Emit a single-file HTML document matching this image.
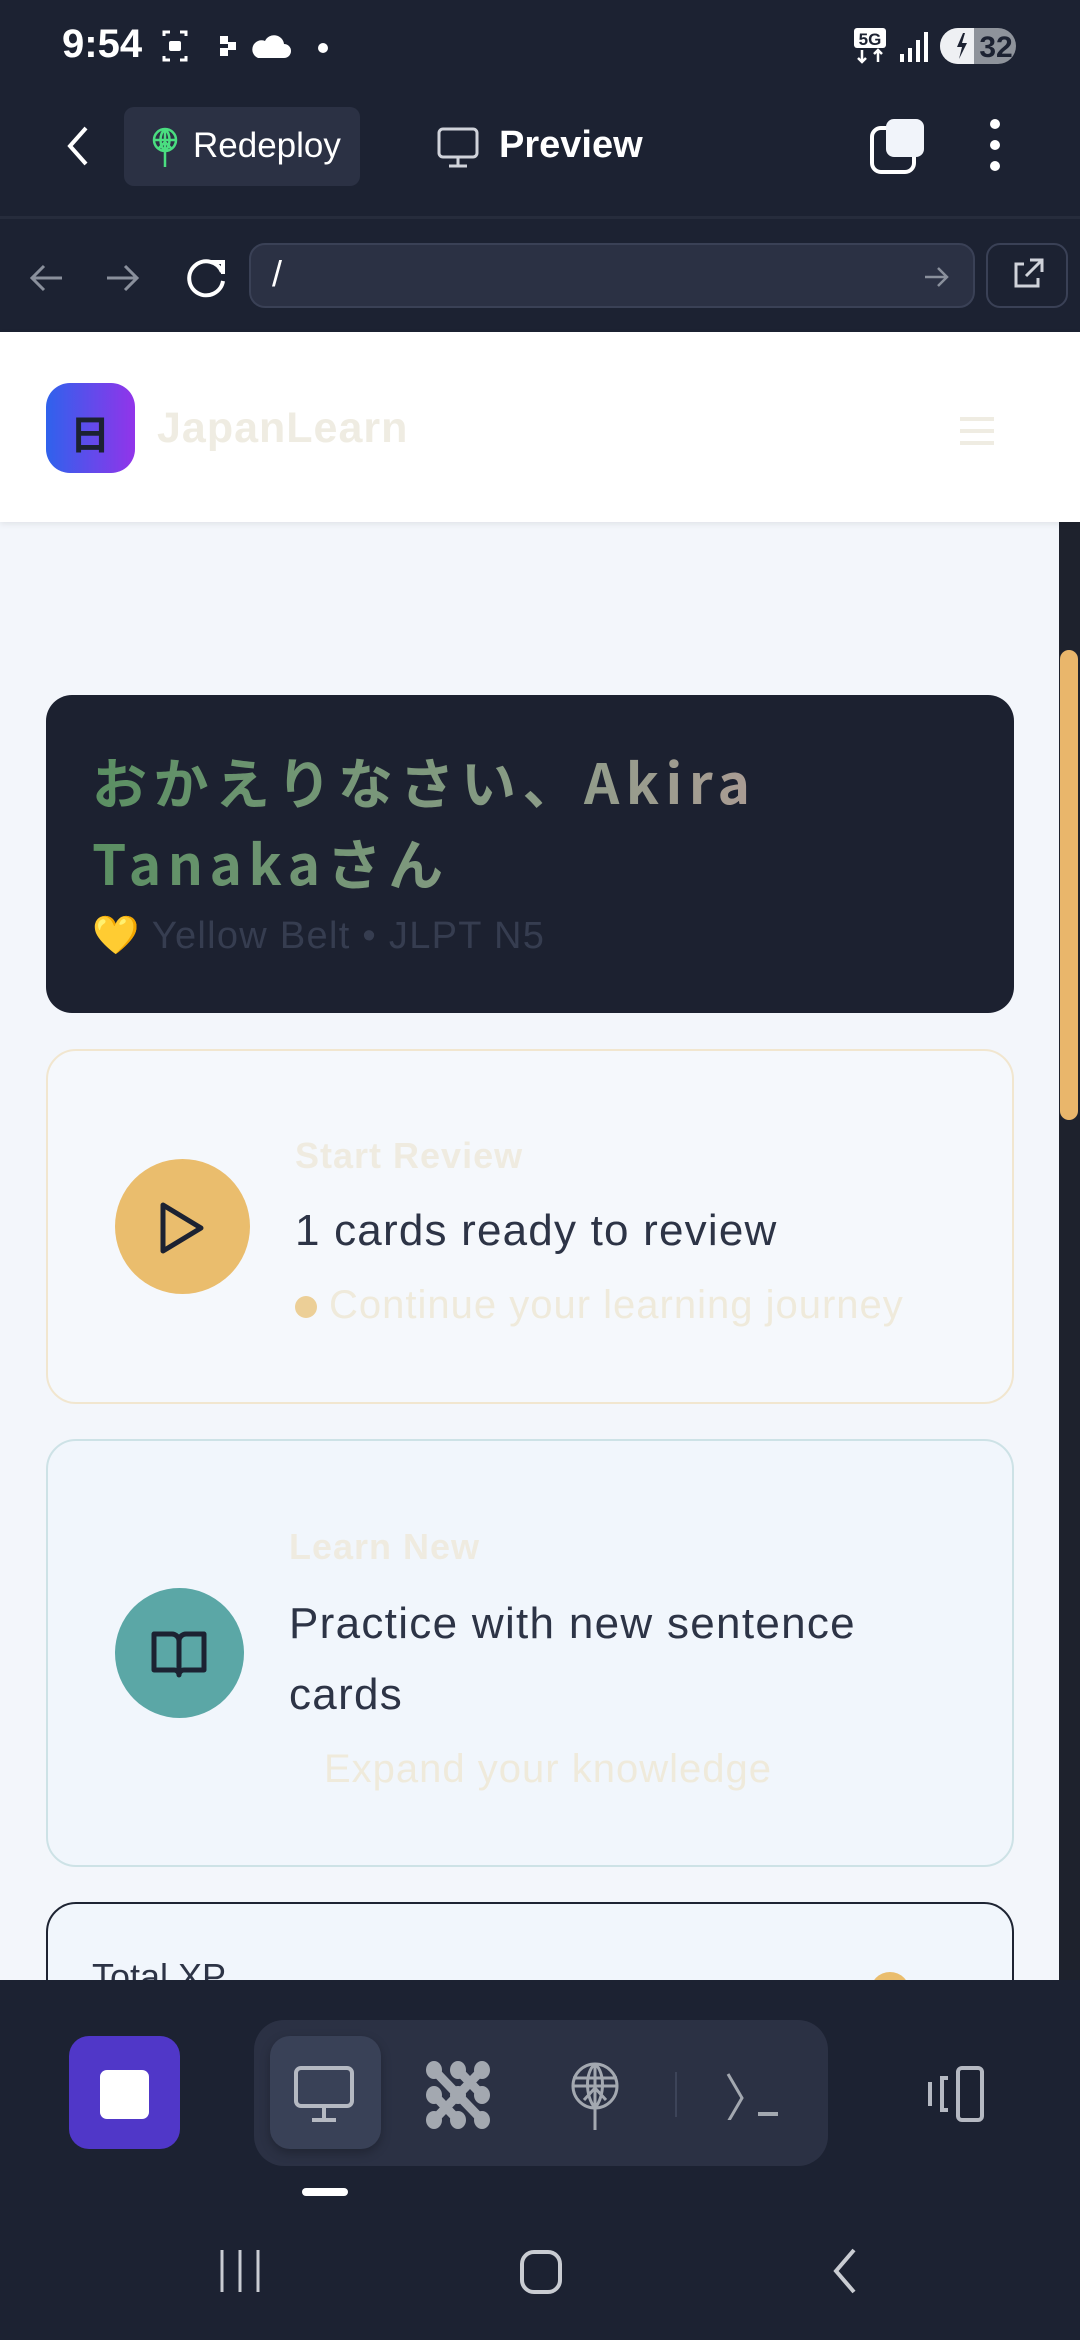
<!DOCTYPE html>
<html><head><meta charset="utf-8">
<style>
*{margin:0;padding:0;box-sizing:border-box}
body{width:1080px;height:2340px;overflow:hidden;background:#1c2232;font-family:"Liberation Sans","Noto Sans CJK JP",sans-serif;position:relative}
.a{position:absolute}
.t{white-space:nowrap}
</style></head><body>
<!-- status bar -->
<div class="a" style="left:0;top:0;width:1080px;height:216px;background:#1c2232"></div>
<div class="a t" style="left:62px;top:22px;font-size:40px;font-weight:bold;color:#fff">9:54</div>
<svg class="a" style="left:160px;top:28px" width="180" height="40" viewBox="0 0 180 40">
<path d="M4 8V4h6M20 4h6v4M26 28v4h-6M10 32H4v-4" stroke="#fff" stroke-width="3" fill="none"/>
<rect x="9" y="13" width="12" height="10" rx="2" fill="#fff"/>
<rect x="60" y="8" width="8" height="8" fill="#fff"/><rect x="68" y="14" width="8" height="8" fill="#fff"/><rect x="60" y="20" width="8" height="8" fill="#fff"/>
<path d="M98 30h26a7 7 0 0 0 0-14 10 10 0 0 0-19-3 8 8 0 0 0-7 17z" fill="#fff"/>
<circle cx="163" cy="20" r="5" fill="#fff"/>
</svg>
<svg class="a" style="left:850px;top:24px" width="170" height="44" viewBox="0 0 170 44">
<rect x="4" y="4" width="32" height="20" rx="3" fill="#fff"/>
<text x="20" y="21" font-size="17" font-weight="bold" text-anchor="middle" fill="#1c2232" font-family="Liberation Sans">5G</text>
<path d="M12 26v12M8 34l4 4 4-4M28 38V26M24 30l4-4 4 4" stroke="#fff" stroke-width="2.5" fill="none"/>
<rect x="50" y="30" width="4" height="8" fill="#fff"/><rect x="58" y="24" width="4" height="14" fill="#fff"/><rect x="66" y="16" width="4" height="22" fill="#fff"/><rect x="74" y="8" width="4" height="30" fill="#fff"/>
<rect x="90" y="4" width="76" height="36" rx="18" fill="#8e939b"/>
<path d="M108 4h16v36h-16a18 18 0 0 1 0-36z" fill="#eef0f3"/>
<path d="M113 9l-6 14h5l-3 12 8-16h-5l3-10z" fill="#1c2232"/>
<text x="146" y="33" font-size="30" font-weight="bold" text-anchor="middle" fill="#1c2232" font-family="Liberation Sans">32</text>
</svg>
<!-- top toolbar -->
<svg class="a" style="left:62px;top:124px" width="30" height="44" viewBox="0 0 30 44"><path d="M24 4L8 22l16 18" stroke="#fff" stroke-width="4" fill="none"/></svg>
<div class="a" style="left:124px;top:107px;width:236px;height:79px;background:#2b3144;border-radius:10px"></div>
<svg class="a" style="left:150px;top:126px" width="30" height="42" viewBox="0 0 30 42"><circle cx="15" cy="14" r="11" stroke="#4ade80" stroke-width="2.5" fill="none"/><path d="M4 14h22M15 3v38M15 3c-6 5-6 17 0 22M15 3c6 5 6 17 0 22M9 22l6-6 6 6" stroke="#4ade80" stroke-width="2.5" fill="none"/></svg>
<div class="a t" style="left:193px;top:126px;font-size:35px;color:#fff">Redeploy</div>
<svg class="a" style="left:436px;top:126px" width="44" height="44" viewBox="0 0 44 44"><rect x="3" y="3" width="38" height="28" rx="4" stroke="#d0d3da" stroke-width="3" fill="none"/><path d="M22 31v8M13 40h18" stroke="#d0d3da" stroke-width="3"/></svg>
<div class="a t" style="left:499px;top:124px;font-size:38px;font-weight:bold;color:#fff">Preview</div>
<svg class="a" style="left:868px;top:116px" width="60" height="60" viewBox="0 0 60 60"><rect x="4" y="12" width="42" height="44" rx="9" stroke="#fff" stroke-width="4" fill="none"/><rect x="18" y="3" width="38" height="38" rx="8" fill="#f1f4fa"/></svg>
<svg class="a" style="left:985px;top:116px" width="20" height="60" viewBox="0 0 20 60"><circle cx="10" cy="8" r="5" fill="#fff"/><circle cx="10" cy="29" r="5" fill="#fff"/><circle cx="10" cy="50" r="5" fill="#fff"/></svg>
<div class="a" style="left:0;top:216px;width:1080px;height:3px;background:#262c3c"></div>
<!-- url row -->
<svg class="a" style="left:28px;top:256px" width="200" height="44" viewBox="0 0 200 44"><path d="M34 22H4M16 10L4 22l12 12" stroke="#8a909c" stroke-width="3" fill="none"/><path d="M79 22h30M97 10l12 12-12 12" stroke="#8a909c" stroke-width="3" fill="none"/><path d="M194 16a17 17 0 1 0 1 9" stroke="#fff" stroke-width="4" fill="none"/><path d="M183 6h12v12" stroke="#fff" stroke-width="4" fill="none"/></svg>
<div class="a" style="left:249px;top:243px;width:726px;height:65px;background:#2b3144;border:2px solid #3a4156;border-radius:16px"></div>
<div class="a t" style="left:272px;top:253px;font-size:36px;color:#fff">/</div>
<svg class="a" style="left:922px;top:262px" width="30" height="30" viewBox="0 0 30 30"><path d="M3 15h22M16 6l9 9-9 9" stroke="#8a909c" stroke-width="2.5" fill="none"/></svg>
<div class="a" style="left:986px;top:243px;width:82px;height:65px;border:2px solid #3a4156;border-radius:14px"></div>
<svg class="a" style="left:1010px;top:256px" width="36" height="36" viewBox="0 0 36 36"><path d="M14 8H6v22h22v-8M20 4h12v12M32 4L16 20" stroke="#d0d3da" stroke-width="3" fill="none"/></svg>
<!-- web content -->
<div class="a" style="left:0;top:332px;width:1059px;height:1648px;background:#f3f6fb"></div>
<div class="a" style="left:1059px;top:332px;width:21px;height:1648px;background:#1e222d"></div>
<div class="a" style="left:1060px;top:650px;width:18px;height:470px;background:#e9b66b;border-radius:9px"></div>
<div class="a" style="left:0;top:332px;width:1080px;height:190px;background:#fff;box-shadow:0 2px 6px rgba(0,0,0,.08)"></div>
<div class="a" style="left:46px;top:383px;width:89px;height:90px;border-radius:24px;background:linear-gradient(90deg,#2f62ec,#9234ea)"></div>
<div class="a t" style="left:70px;top:403px;font-size:40px;font-weight:bold;color:#1c2232">日</div>
<div class="a t" style="left:157px;top:404px;font-size:43px;font-weight:bold;letter-spacing:1px;color:#efece2">JapanLearn</div>
<svg class="a" style="left:958px;top:414px" width="38" height="34" viewBox="0 0 38 34"><path d="M2 5h34M2 17h34M2 29h34" stroke="#efece2" stroke-width="4"/></svg>
<!-- hero card -->
<div class="a" style="left:46px;top:695px;width:968px;height:318px;background:#1c2130;border-radius:26px"></div>
<div class="a" style="left:92px;top:740px;width:910px;font-size:55px;line-height:81px;letter-spacing:6.5px;font-weight:bold;background:linear-gradient(90deg,#5a8f62,#8c9c88 50%,#ad9c95 75%);-webkit-background-clip:text;background-clip:text;color:transparent;font-family:'Noto Sans CJK JP',sans-serif">おかえりなさい、Akira<br>Tanakaさん</div>
<div class="a t" style="left:92px;top:914px;font-size:38px;letter-spacing:1.3px;color:#363d50">💛 Yellow Belt • JLPT N5</div>
<!-- review card -->
<div class="a" style="left:46px;top:1049px;width:968px;height:355px;border:2px solid #f1e6cf;border-radius:30px;background:#f5f8fc"></div>
<div class="a" style="left:115px;top:1159px;width:135px;height:135px;border-radius:50%;background:#eabd6d"></div>
<svg class="a" style="left:158px;top:1200px" width="50" height="56" viewBox="0 0 50 56"><path d="M5 5v46l38-23z" stroke="#1c2232" stroke-width="5" fill="none" stroke-linejoin="round"/></svg>
<div class="a t" style="left:295px;top:1135px;font-size:36px;font-weight:bold;letter-spacing:1px;color:#efebe0">Start Review</div>
<div class="a t" style="left:295px;top:1206px;font-size:44px;letter-spacing:1.2px;color:#2d3446">1 cards ready to review</div>
<div class="a" style="left:295px;top:1296px;width:22px;height:22px;border-radius:50%;background:#eccf97"></div>
<div class="a t" style="left:329px;top:1283px;font-size:40px;letter-spacing:1px;color:#efeadb">Continue your learning journey</div>
<!-- learn card -->
<div class="a" style="left:46px;top:1439px;width:968px;height:428px;border:2px solid #cde2e6;border-radius:30px;background:#f1f6fc"></div>
<div class="a" style="left:115px;top:1588px;width:129px;height:130px;border-radius:50%;background:#5ba7a6"></div>
<svg class="a" style="left:150px;top:1630px" width="58" height="50" viewBox="0 0 58 50"><path d="M4 4h18a7 7 0 0 1 7 7v34a5 5 0 0 0-5-5H4zM54 4H36a7 7 0 0 0-7 7v34a5 5 0 0 1 5-5h20z" stroke="#1c2232" stroke-width="5" fill="none" stroke-linejoin="round"/></svg>
<div class="a t" style="left:289px;top:1526px;font-size:36px;font-weight:bold;letter-spacing:1px;color:#efebe0">Learn New</div>
<div class="a" style="left:289px;top:1588px;font-size:44px;line-height:71px;letter-spacing:1.3px;color:#2d3446">Practice with new sentence<br>cards</div>
<div class="a t" style="left:324px;top:1747px;font-size:40px;letter-spacing:1px;color:#efeadb">Expand your knowledge</div>
<!-- total xp card -->
<div class="a" style="left:46px;top:1902px;width:968px;height:200px;border:2px solid #1e2433;border-radius:30px;background:#f1f6fc"></div>
<div class="a t" style="left:92px;top:1956px;font-size:36px;color:#2d3446">Total XP</div>
<div class="a" style="left:870px;top:1972px;width:40px;height:40px;border-radius:50%;background:#eabd6d"></div>
<!-- bottom bar -->
<div class="a" style="left:0;top:1980px;width:1080px;height:360px;background:#1c2232"></div>
<div class="a" style="left:69px;top:2036px;width:111px;height:113px;border-radius:20px;background:#5037c8"></div>
<div class="a" style="left:100px;top:2070px;width:49px;height:49px;border-radius:7px;background:#fff"></div>
<div class="a" style="left:254px;top:2020px;width:574px;height:146px;border-radius:30px;background:#2b3144"></div>
<div class="a" style="left:270px;top:2036px;width:111px;height:113px;border-radius:20px;background:#394157;box-shadow:0 4px 10px rgba(0,0,0,.25)"></div>
<svg class="a" style="left:292px;top:2064px" width="64" height="60" viewBox="0 0 64 60"><rect x="4" y="4" width="56" height="38" rx="5" stroke="#b5b9c2" stroke-width="4" fill="none"/><path d="M32 42v12M20 56h24" stroke="#b5b9c2" stroke-width="4"/></svg>
<svg class="a" style="left:424px;top:2060px" width="70" height="70" viewBox="0 0 70 70" fill="#a3a8b0"><ellipse cx="10" cy="10" rx="8" ry="9"/><ellipse cx="34" cy="10" rx="8" ry="9"/><ellipse cx="58" cy="10" rx="8" ry="9"/><ellipse cx="10" cy="35" rx="8" ry="9"/><ellipse cx="34" cy="35" rx="8" ry="9"/><ellipse cx="58" cy="35" rx="8" ry="9"/><ellipse cx="10" cy="60" rx="8" ry="9"/><ellipse cx="34" cy="60" rx="8" ry="9"/><ellipse cx="58" cy="60" rx="8" ry="9"/><path d="M10 10L34 35 58 60M34 10L58 35M10 35L34 60M58 10L34 35 10 60" stroke="#a3a8b0" stroke-width="9"/></svg>
<svg class="a" style="left:566px;top:2060px" width="58" height="72" viewBox="0 0 58 72"><circle cx="29" cy="26" r="22" stroke="#a3a8b0" stroke-width="3" fill="none"/><path d="M7 26h44M7 18h44M29 4v66M29 4c-10 8-10 32 0 44M29 4c10 8 10 32 0 44M18 40l11-12 11 12" stroke="#a3a8b0" stroke-width="3" fill="none"/></svg>
<div class="a" style="left:675px;top:2072px;width:2px;height:45px;background:#3d4459"></div>
<svg class="a" style="left:724px;top:2070px" width="60" height="50" viewBox="0 0 60 50"><path d="M4 4l14 24L4 52" stroke="#a3a8b0" stroke-width="3" fill="none"/><path d="M34 44h20" stroke="#a3a8b0" stroke-width="4"/></svg>
<svg class="a" style="left:922px;top:2064px" width="68" height="62" viewBox="0 0 68 62"><rect x="36" y="4" width="24" height="52" rx="4" stroke="#b5b9c2" stroke-width="4" fill="none"/><path d="M26 14h-6v32h6M8 18v24" stroke="#b5b9c2" stroke-width="4" fill="none"/></svg>
<div class="a" style="left:302px;top:2188px;width:46px;height:8px;border-radius:4px;background:#fff"></div>
<!-- nav bar -->
<svg class="a" style="left:210px;top:2246px" width="60" height="50" viewBox="0 0 60 50"><path d="M12 4v42M30 4v42M48 4v42" stroke="#c9ccd2" stroke-width="3"/></svg>
<div class="a" style="left:520px;top:2250px;width:42px;height:44px;border:4px solid #c9ccd2;border-radius:14px"></div>
<svg class="a" style="left:824px;top:2246px" width="40" height="50" viewBox="0 0 40 50"><path d="M30 4L12 25l18 21" stroke="#c9ccd2" stroke-width="4" fill="none"/></svg>
</body></html>
